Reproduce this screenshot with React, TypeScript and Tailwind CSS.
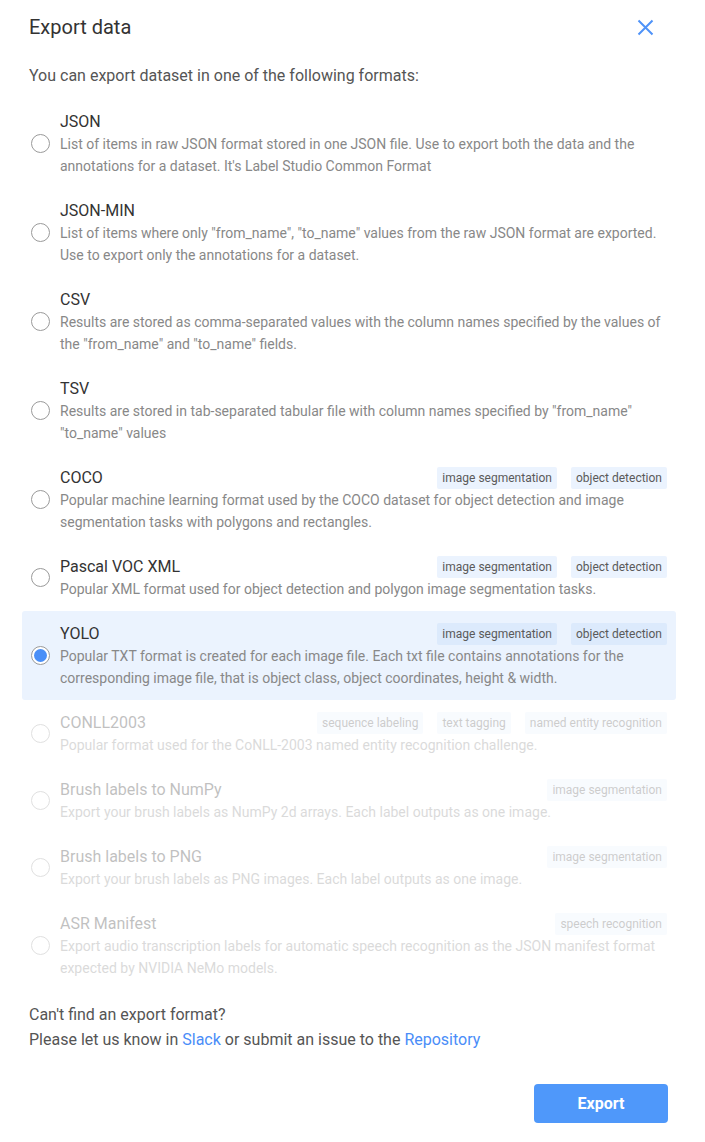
import React, { useState } from 'react';

interface Format {
  id: string
  title: string
  description: string
  tags?: string[]
  disabled?: boolean
}

const formats: Format[] = [
  {
    id: 'JSON',
    title: 'JSON',
    description: "List of items in raw JSON format stored in one JSON file. Use to export both the data and the annotations for a dataset. It's Label Studio Common Format",
  },
  {
    id: 'JSON_MIN',
    title: 'JSON-MIN',
    description: 'List of items where only "from_name", "to_name" values from the raw JSON format are exported. Use to export only the annotations for a dataset.',
  },
  {
    id: 'CSV',
    title: 'CSV',
    description: 'Results are stored as comma-separated values with the column names specified by the values of the "from_name" and "to_name" fields.',
  },
  {
    id: 'TSV',
    title: 'TSV',
    description: 'Results are stored in tab-separated tabular file with column names specified by "from_name" "to_name" values',
  },
  {
    id: 'COCO',
    title: 'COCO',
    description: 'Popular machine learning format used by the COCO dataset for object detection and image segmentation tasks with polygons and rectangles.',
    tags: ['image segmentation', 'object detection'],
  },
  {
    id: 'VOC',
    title: 'Pascal VOC XML',
    description: 'Popular XML format used for object detection and polygon image segmentation tasks.',
    tags: ['image segmentation', 'object detection'],
  },
  {
    id: 'YOLO',
    title: 'YOLO',
    description: 'Popular TXT format is created for each image file. Each txt file contains annotations for the corresponding image file, that is object class, object coordinates, height & width.',
    tags: ['image segmentation', 'object detection'],
  },
  {
    id: 'CONLL2003',
    title: 'CONLL2003',
    description: 'Popular format used for the CoNLL-2003 named entity recognition challenge.',
    tags: ['sequence labeling', 'text tagging', 'named entity recognition'],
    disabled: true,
  },
  {
    id: 'BRUSH_TO_NUMPY',
    title: 'Brush labels to NumPy',
    description: 'Export your brush labels as NumPy 2d arrays. Each label outputs as one image.',
    tags: ['image segmentation'],
    disabled: true,
  },
  {
    id: 'BRUSH_TO_PNG',
    title: 'Brush labels to PNG',
    description: 'Export your brush labels as PNG images. Each label outputs as one image.',
    tags: ['image segmentation'],
    disabled: true,
  },
  {
    id: 'ASR_MANIFEST',
    title: 'ASR Manifest',
    description: 'Export audio transcription labels for automatic speech recognition as the JSON manifest format expected by NVIDIA NeMo models.',
    tags: ['speech recognition'],
    disabled: true,
  },
];

function Radio({ checked }: { checked: boolean }) {
  return (
    <div className="w-[19px] h-[19px] rounded-full border border-[#9a9a9a] bg-white flex items-center justify-center shrink-0">
      {checked && <div className="w-[13px] h-[13px] rounded-full bg-[#4a8ff7]" />}
    </div>
  )
}

function FormatItem({ format, selected, onSelect }: { format: Format, selected: boolean, onSelect: () => void }) {
  return (
    <div
      onClick={() => !format.disabled && onSelect()}
      className={`flex items-center rounded-[3px] py-[11px] pl-[9px] pr-[9px] ${selected ? 'bg-[#ebf3fe]' : ''} ${format.disabled ? 'opacity-30' : 'cursor-pointer'}`}
    >
      <Radio checked={selected} />
      <div className="ml-[10px] flex-1 min-w-0">
        <div className="flex items-center justify-between h-[23px]">
          <div className="text-[16px] text-[#333]">{format.title}</div>
          {format.tags && (
            <div className="flex gap-[14px]">
              {format.tags.map(tag => (
                <span
                  key={tag}
                  className={`h-[22px] leading-[22px] px-[5px] rounded-[2px] text-[12px] text-[#5a5a5a] ${selected ? 'bg-[#dceafc]' : 'bg-[#ebf3fe]'}`}
                >
                  {tag}
                </span>
              ))}
            </div>
          )}
        </div>
        <div className="text-[14px] leading-[22px] text-[#888]">{format.description}</div>
      </div>
    </div>
  )
}

export default function App() {
  const [selected, setSelected] = useState('YOLO');

  return (
    <div className="w-[705px] min-h-[1142px] bg-white px-[29px] font-['Roboto',sans-serif]">
      <div className="flex items-center justify-between pt-[13px] h-[41px]">
        <div className="text-[20px] leading-[28px] text-[#333]">Export data</div>
        <button className="mr-[22px] text-[#4f93f8]">
          <svg width="17" height="17" viewBox="0 0 17 17" fill="none" stroke="currentColor" strokeWidth="2">
            <path d="M1.5 1.5 L15.5 15.5 M15.5 1.5 L1.5 15.5" />
          </svg>
        </button>
      </div>

      <div className="mt-[24px] text-[16px] leading-[22px] text-[#555]">
        You can export dataset in one of the following formats:
      </div>

      <div className="mt-[12px] -ml-[7px]">
        {formats.map(format => (
          <FormatItem
            key={format.id}
            format={format}
            selected={selected === format.id}
            onSelect={() => setSelected(format.id)}
          />
        ))}
      </div>

      <div className="mt-[12px] text-[16px] leading-[25px] text-[#555]">
        <div>Can't find an export format?</div>
        <div>
          Please let us know in <a className="text-[#4a8df8]">Slack</a> or submit an issue to the{' '}
          <a className="text-[#4a8df8]">Repository</a>
        </div>
      </div>

      <div className="flex justify-end mt-[32px] mr-[8px]">
        <button className="w-[134px] h-[39px] rounded-[4px] bg-[#4f98fa] text-white text-[16px] font-bold">
          Export
        </button>
      </div>
    </div>
  );
}
